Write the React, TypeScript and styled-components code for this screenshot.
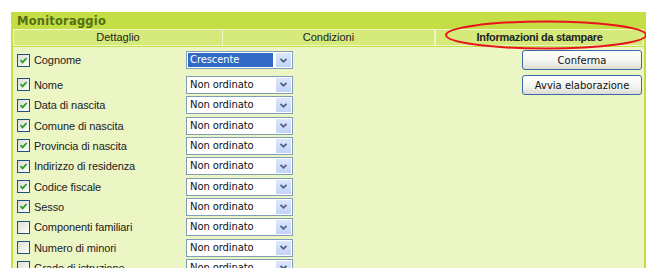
import styled, { createGlobalStyle } from 'styled-components';

const Global = createGlobalStyle`
  html, body {
    margin: 0;
    padding: 0;
    background: #ffffff;
  }
  body {
    font-family: 'Liberation Sans', Arial, sans-serif;
    overflow: hidden;
  }
`;

const Page = styled.div`
  padding: 12px 0 0 11px;
  width: 635px;
  height: 256px;
  overflow: hidden;
`;

const Panel = styled.div`
  position: relative;
  background: #ecf5c4;
  border: 2px solid #c4df45;
  border-top: 0;
  border-bottom: 0;
  height: 100%;
  box-sizing: border-box;
`;

const TitleBar = styled.div`
  background: #c4df45;
  height: 17px;
  margin: 0 -2px;
  padding-left: 6px;
  font-family: 'DejaVu Sans', Verdana, sans-serif;
  font-weight: bold;
  font-size: 11.5px;
  letter-spacing: 0.2px;
  line-height: 18px;
  color: #536e14;
`;

const Tabs = styled.div`
  display: grid;
  grid-template-columns: 210px 212px 1fr;
  background: #d5ea7a;
  border-bottom: 1px solid #c4df45;
`;

const Tab = styled.div<{ $active?: boolean }>`
  height: 15px;
  border: 1px solid #eef7c2;
  border-left-width: ${(p) => (p.$active ? 1 : 0)}px;
  text-align: center;
  font-size: 11px;
  line-height: 15px;
  color: #222;
  font-weight: ${(p) => (p.$active ? 'bold' : 'normal')};
  letter-spacing: ${(p) => (p.$active ? -0.3 : 0)}px;
  &:first-child {
    border-left-width: 1px;
  }
`;

const Body = styled.div`
  display: grid;
  grid-template-columns: 1fr 120px;
  padding: 3px 2px 0 4px;
`;

const Rows = styled.div`
  display: flex;
  flex-direction: column;
`;

const Row = styled.div<{ $first?: boolean }>`
  display: flex;
  align-items: center;
  height: 20.33px;
  margin-bottom: ${(p) => (p.$first ? 4.5 : 0)}px;
`;

const Check = styled.span<{ $on: boolean }>`
  width: 11px;
  height: 11px;
  border: 1px solid #1c5180;
  background: linear-gradient(135deg, #dcdcd6 0%, #f4f4f0 70%, #ffffff 100%);
  display: flex;
  align-items: center;
  justify-content: center;
  flex: none;
  svg {
    visibility: ${(p) => (p.$on ? 'visible' : 'hidden')};
  }
`;

const Label = styled.span`
  width: 152px;
  margin-left: 4px;
  font-size: 11px;
  letter-spacing: -0.1px;
  color: #222;
  white-space: nowrap;
`;

const Select = styled.div`
  width: 103px;
  height: 14px;
  border: 1px solid #7f9db9;
  background: #fff;
  display: flex;
  align-items: center;
  padding: 1px;
  box-sizing: content-box;
`;

const SelectText = styled.span<{ $selected?: boolean }>`
  flex: 1;
  height: 14px;
  padding-left: 2px;
  margin-right: 3px;
  font-family: 'DejaVu Sans', Verdana, sans-serif;
  font-size: 10px;
  letter-spacing: -0.1px;
  line-height: 14px;
  color: ${(p) => (p.$selected ? '#fff' : '#111')};
  background: ${(p) => (p.$selected ? '#316ac5' : 'transparent')};
  white-space: nowrap;
  overflow: hidden;
`;

const Arrow = styled.span`
  width: 15px;
  height: 14px;
  background: linear-gradient(180deg, #dde7fb 0%, #c2d3f8 100%);
  display: flex;
  align-items: center;
  justify-content: center;
`;

const Actions = styled.div`
  display: flex;
  flex-direction: column;
  gap: 5px;
`;

const Button = styled.button`
  width: 120px;
  height: 20px;
  border: 1px solid #3c6aa6;
  border-radius: 3px;
  background: linear-gradient(180deg, #ffffff 0%, #f4f4ef 60%, #dcdcd4 100%);
  font-family: 'DejaVu Sans', Verdana, sans-serif;
  font-size: 10px;
  color: #111;
  padding: 0;
  cursor: pointer;
`;

const Ring = styled.svg`
  position: absolute;
  left: 430px;
  top: 7px;
  pointer-events: none;
`;

const fields: [string, boolean, string?][] = [
  ['Cognome', true, 'Crescente'],
  ['Nome', true],
  ['Data di nascita', true],
  ['Comune di nascita', true],
  ['Provincia di nascita', true],
  ['Indirizzo di residenza', true],
  ['Codice fiscale', true],
  ['Sesso', true],
  ['Componenti familiari', false],
  ['Numero di minori', false],
  ['Grado di istruzione', false],
];

function Tick() {
  return (
    <svg width="9" height="9" viewBox="0 0 9 9">
      <path d="M1.5 4.2 L3.6 6.4 L7.6 2" fill="none" stroke="#21a121" strokeWidth="1.8" />
    </svg>
  );
}

function Chevron() {
  return (
    <svg width="9" height="7" viewBox="0 0 9 7">
      <path d="M1.5 1.8 L4.5 4.8 L7.5 1.8" fill="none" stroke="#4d6185" strokeWidth="1.8" />
    </svg>
  );
}

export default function App() {
  return (
    <>
      <Global />
      <Page>
        <Panel>
          <TitleBar>Monitoraggio</TitleBar>
          <Tabs>
            <Tab>Dettaglio</Tab>
            <Tab>Condizioni</Tab>
            <Tab $active>Informazioni da stampare</Tab>
          </Tabs>
          <Body>
            <Rows>
              {fields.map(([name, on, order], i) => (
                <Row key={name} $first={i === 0}>
                  <Check $on={on}>
                    <Tick />
                  </Check>
                  <Label>{name}</Label>
                  <Select>
                    <SelectText $selected={!!order}>{order ?? 'Non ordinato'}</SelectText>
                    <Arrow>
                      <Chevron />
                    </Arrow>
                  </Select>
                </Row>
              ))}
            </Rows>
            <Actions>
              <Button>Conferma</Button>
              <Button>Avvia elaborazione</Button>
            </Actions>
          </Body>
          <Ring width="206" height="32" viewBox="0 0 206 32">
            <ellipse cx="103" cy="16" rx="100" ry="13.5" fill="none" stroke="#e8141c" strokeWidth="2" />
          </Ring>
        </Panel>
      </Page>
    </>
  );
}
